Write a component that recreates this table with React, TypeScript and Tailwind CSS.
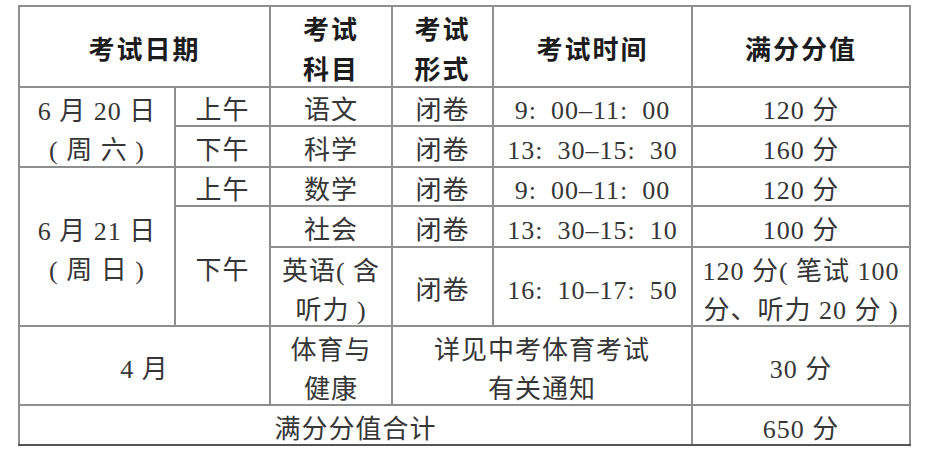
import React from "react";

const cell = "bg-white flex flex-col items-center justify-center text-center pt-[8px] whitespace-nowrap";
const hd = `${cell} font-bold text-[#1c1c1c] tracking-[2px] leading-[40px]`;
const td = `${cell} text-[#363636] tracking-[1px] leading-[39px]`;

export default function App() {
  return (
    <div
      className="w-[928px] h-[454px] bg-white pl-[18px] pt-[5px]"
      style={{ fontFamily: '"Liberation Serif", "Noto Sans CJK SC", serif' }}
    >
      <div className="grid w-[893px] grid-cols-[154px_93px_120px_99px_197px_216px] grid-rows-[79px_37px_39px_37px_39px_77px_77px_38px] gap-[2px] bg-[#8e8e8e] px-[2px] pt-[2px] border-b-2 border-b-[#555555] text-[26px]">
        <div className={`${hd} col-start-1 col-span-2 row-start-1`}>考试日期</div>
        <div className={`${hd} col-start-3 row-start-1`}><span>考试</span><span>科目</span></div>
        <div className={`${hd} col-start-4 row-start-1`}><span>考试</span><span>形式</span></div>
        <div className={`${hd} col-start-5 row-start-1`}>考试时间</div>
        <div className={`${hd} col-start-6 row-start-1`}>满分分值</div>

        <div className={`${td} col-start-1 row-start-2 row-span-2 tracking-[0px]`}><span>6 月 20 日</span><span>( 周 六 )</span></div>
        <div className={`${td} col-start-2 row-start-2`}>上午</div>
        <div className={`${td} col-start-3 row-start-2`}>语文</div>
        <div className={`${td} col-start-4 row-start-2`}>闭卷</div>
        <div className={`${td} col-start-5 row-start-2`}>9:{"\u2002"}00–11:{"\u2002"}00</div>
        <div className={`${td} col-start-6 row-start-2`}>120 分</div>

        <div className={`${td} col-start-2 row-start-3`}>下午</div>
        <div className={`${td} col-start-3 row-start-3`}>科学</div>
        <div className={`${td} col-start-4 row-start-3`}>闭卷</div>
        <div className={`${td} col-start-5 row-start-3`}>13:{"\u2002"}30–15:{"\u2002"}30</div>
        <div className={`${td} col-start-6 row-start-3`}>160 分</div>

        <div className={`${td} col-start-1 row-start-4 row-span-3 tracking-[0px]`}><span>6 月 21 日</span><span>( 周 日 )</span></div>
        <div className={`${td} col-start-2 row-start-4`}>上午</div>
        <div className={`${td} col-start-3 row-start-4`}>数学</div>
        <div className={`${td} col-start-4 row-start-4`}>闭卷</div>
        <div className={`${td} col-start-5 row-start-4`}>9:{"\u2002"}00–11:{"\u2002"}00</div>
        <div className={`${td} col-start-6 row-start-4`}>120 分</div>

        <div className={`${td} col-start-2 row-start-5 row-span-2`}>下午</div>
        <div className={`${td} col-start-3 row-start-5`}>社会</div>
        <div className={`${td} col-start-4 row-start-5`}>闭卷</div>
        <div className={`${td} col-start-5 row-start-5`}>13:{"\u2002"}30–15:{"\u2002"}10</div>
        <div className={`${td} col-start-6 row-start-5`}>100 分</div>

        <div className={`${td} col-start-3 row-start-6`}><span>英语( 含</span><span>听力 )</span></div>
        <div className={`${td} col-start-4 row-start-6`}>闭卷</div>
        <div className={`${td} col-start-5 row-start-6`}>16:{"\u2002"}10–17:{"\u2002"}50</div>
        <div className={`${td} col-start-6 row-start-6 tracking-[0px]`}><span>120 分( 笔试 100</span><span>分、听力 20 分 )</span></div>

        <div className={`${td} col-start-1 col-span-2 row-start-7`}>4 月</div>
        <div className={`${td} col-start-3 row-start-7`}><span>体育与</span><span>健康</span></div>
        <div className={`${td} col-start-4 col-span-2 row-start-7`}><span>详见中考体育考试</span><span>有关通知</span></div>
        <div className={`${td} col-start-6 row-start-7`}>30 分</div>

        <div className={`${td} col-start-1 col-span-5 row-start-8`}>满分分值合计</div>
        <div className={`${td} col-start-6 row-start-8`}>650 分</div>
      </div>
    </div>
  );
}
